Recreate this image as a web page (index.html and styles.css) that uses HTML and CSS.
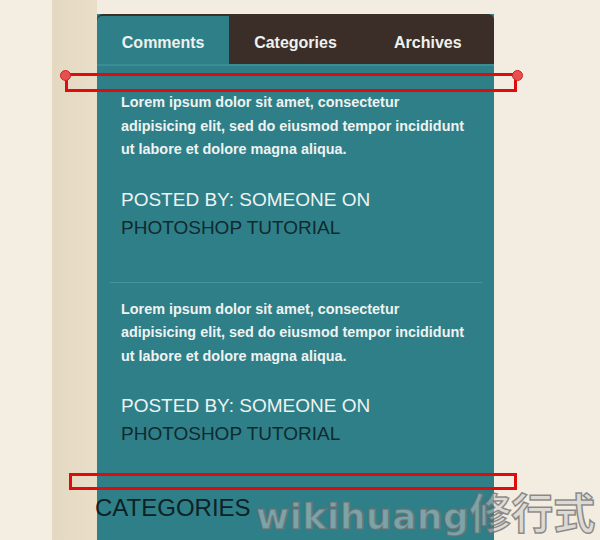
FILE: index.html
```html
<!DOCTYPE html>
<html>
<head>
<meta charset="utf-8">
<link rel="stylesheet" href="styles.css">
</head>
<body>
<div class="page">
  <div class="strip-light"></div>
  <div class="strip-beige"></div>
  <div class="sidebar">
    <div class="tabs">
      <div class="tab active">Comments</div>
      <div class="tab">Categories</div>
      <div class="tab">Archives</div>
    </div>
    <div class="content">
      <div class="post">
        <p class="excerpt">Lorem ipsum dolor sit amet, consectetur adipisicing elit, sed do eiusmod tempor incididunt ut labore et dolore magna aliqua.</p>
        <p class="meta">POSTED BY: SOMEONE ON <span class="link">PHOTOSHOP TUTORIAL</span></p>
      </div>
      <div class="post last">
        <p class="excerpt">Lorem ipsum dolor sit amet, consectetur adipisicing elit, sed do eiusmod tempor incididunt ut labore et dolore magna aliqua.</p>
        <p class="meta">POSTED BY: SOMEONE ON <span class="link">PHOTOSHOP TUTORIAL</span></p>
      </div>
    </div>
    <h2 class="section-title">CATEGORIES</h2>
  </div>
</div>
<div class="mark mark-top"></div>
<div class="dot dot-left"></div>
<div class="dot dot-right"></div>
<div class="mark mark-bottom"></div>
<div class="watermark">wikihuang<span class="cjk">修行式</span></div>
</body>
</html>
```
FILE: styles.css
```css
html, body {
  margin: 0;
  padding: 0;
  height: 100%;
  overflow: hidden;
}
body {
  background: #f3ece0;
  font-family: "Liberation Sans", Arial, sans-serif;
}
.page {
  display: flex;
  height: 540px;
}
.strip-light {
  width: 52px;
  background: #f4ede2;
}
.strip-beige {
  width: 45px;
  background: linear-gradient(to right, #e4d8c1, #e9dec9);
}
.sidebar {
  width: 397px;
  margin-top: 14px;
  display: flex;
  flex-direction: column;
  background: #2f7f88;
}
.tabs {
  display: flex;
  height: 48px;
  padding-top: 2px;
  background: #3b2e28;
  border-radius: 6px 6px 0 0;
}
.tab {
  flex: 1;
  display: flex;
  align-items: center;
  justify-content: center;
  color: #eef1ee;
  font-weight: bold;
  font-size: 16px;
  padding-top: 6px;
}
.tab.active {
  background: #2f7f88;
  border-radius: 5px 0 0 0;
}
.content {
  border-top: 2px solid #3a8c95;
  padding: 0 12px 0 13px;
}
.post {
  padding: 25px 11px 40px;
  border-bottom: 1px solid #44959e;
}
.post + .post {
  padding-top: 15px;
}
.post.last {
  border-bottom: none;
  padding-bottom: 0;
}
.excerpt {
  margin: 0;
  color: #eef3f1;
  font-weight: bold;
  font-size: 14.4px;
  line-height: 23.5px;
}
.meta {
  margin: 24px 0 0;
  color: #eef3f1;
  font-size: 19px;
  line-height: 28px;
}
.link {
  color: #0f2a2f;
}
.section-title {
  margin: 46px 0 0 -2px;
  font-weight: normal;
  font-size: 24px;
  line-height: 28px;
  color: #0d2226;
}
.mark {
  position: absolute;
  border: 3px solid #e00c0c;
  box-sizing: border-box;
}
.mark-top {
  left: 65px;
  top: 73px;
  width: 452px;
  height: 19px;
}
.mark-bottom {
  left: 69px;
  top: 473px;
  width: 448px;
  height: 17px;
}
.dot {
  position: absolute;
  width: 9px;
  height: 9px;
  border-radius: 50%;
  background: #e85050;
  border: 1px solid #d02020;
}
.dot-left { left: 60px; top: 70px; }
.dot-right { left: 512px; top: 70px; }
.watermark {
  position: absolute;
  left: 256px;
  top: 488px;
  font-family: "DejaVu Sans", sans-serif;
  font-weight: bold;
  font-size: 36px;
  line-height: 46px;
  color: rgba(200, 200, 200, 0.5);
  -webkit-text-stroke: 1.5px rgba(110, 110, 110, 0.75);
  letter-spacing: 0.5px;
  white-space: nowrap;
}
.watermark .cjk {
  font-family: "Noto Sans CJK SC", sans-serif;
  font-size: 42px;
  letter-spacing: 0;
}
```
